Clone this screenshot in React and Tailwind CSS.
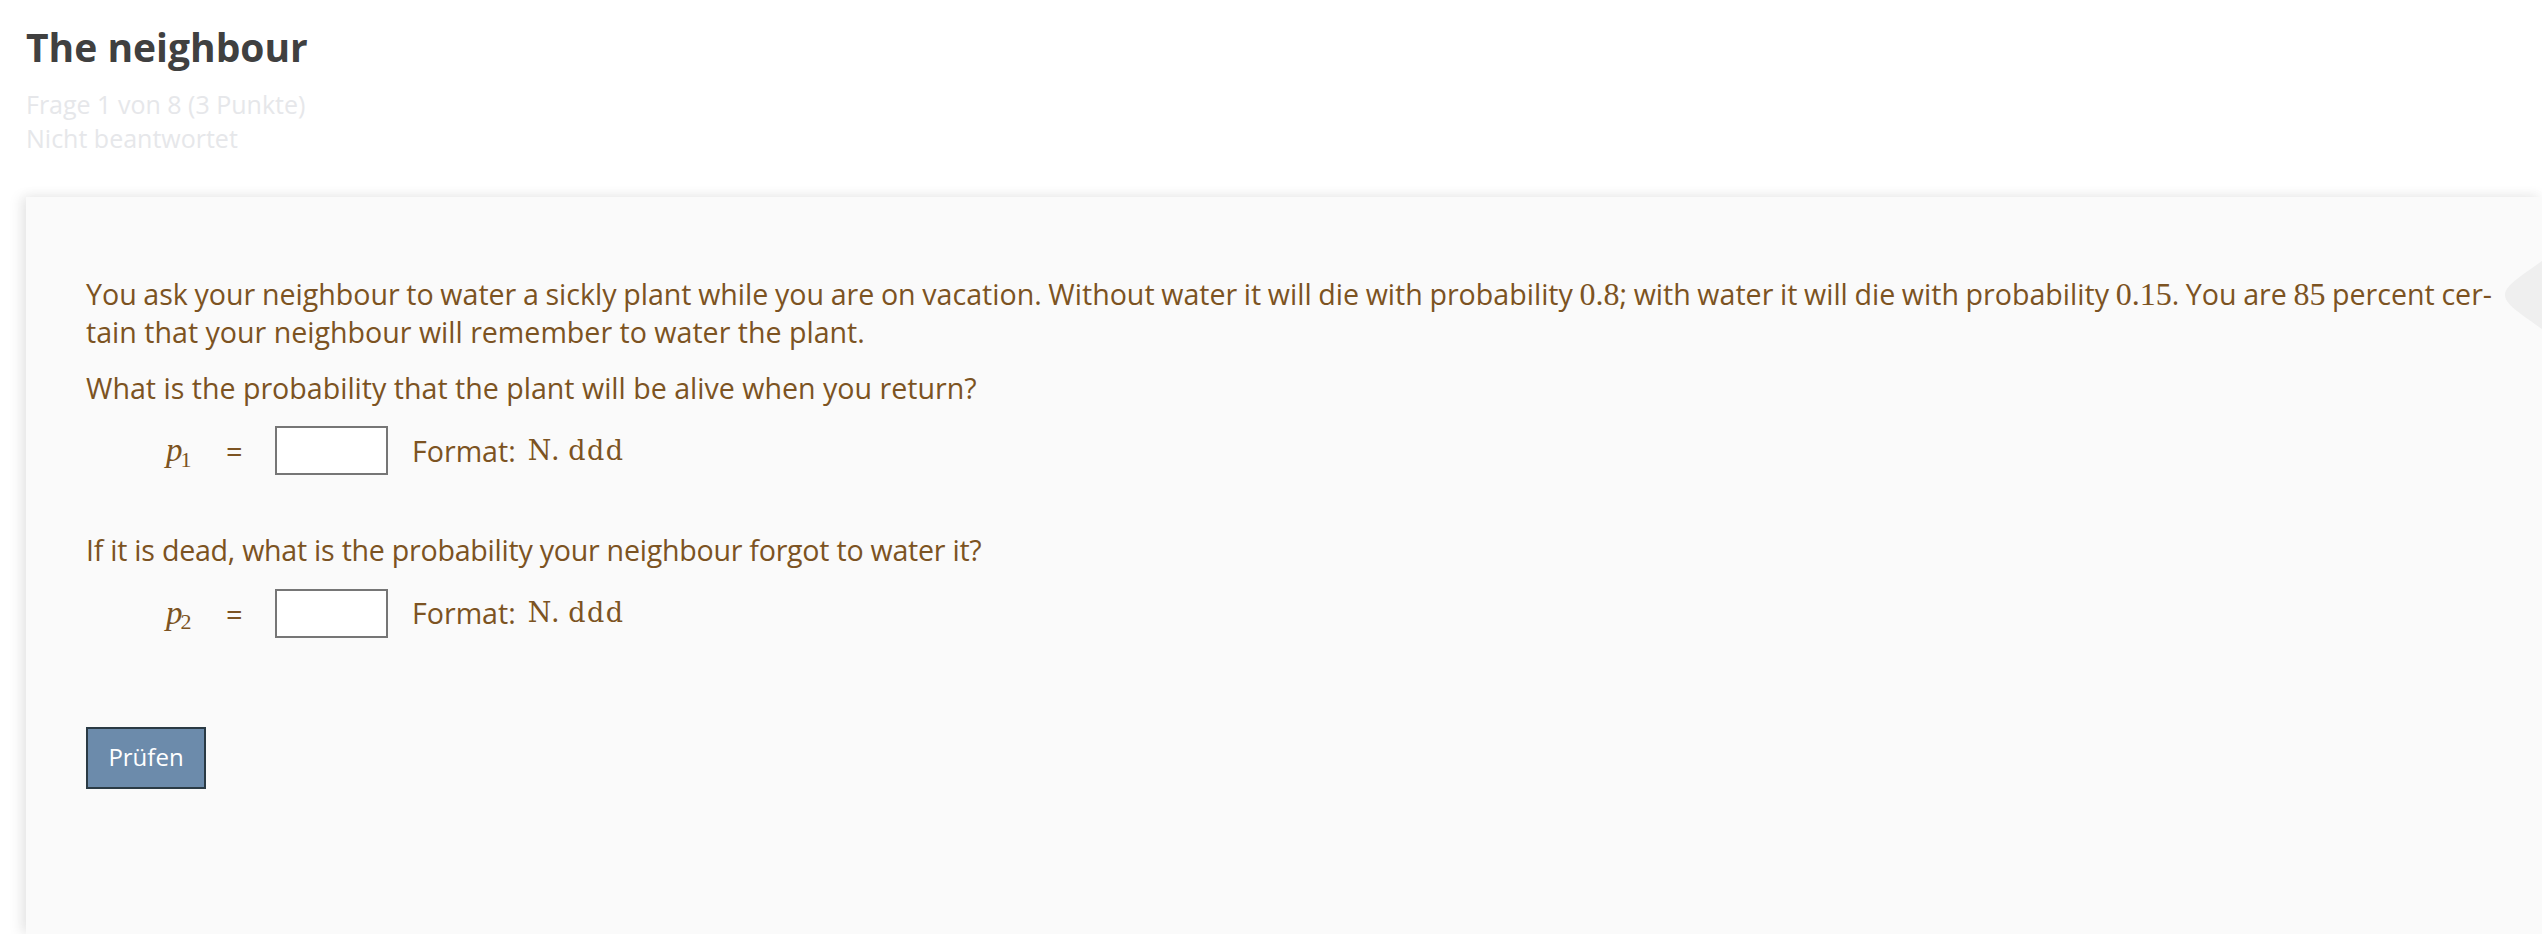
import React from 'react'

const MATH = "font-['Liberation_Serif',serif]"

function Num({ children }) {
  return <span className={`${MATH} text-[32px]`}>{children}</span>
}

function AnswerRow({ sub, className = '' }) {
  return (
    <div className={`flex items-center h-[49px] pl-[80px] ${className}`}>
      <span className={`${MATH} w-[58px] italic text-[33px] leading-none`}>
        p<sub className="not-italic text-[22px] ml-[-2px]">{sub}</sub>
      </span>
      <span className="w-[51px] pl-[2px] text-[29px] leading-none">=</span>
      <input
        type="text"
        className="w-[113px] h-[49px] border-2 border-[#767676] bg-white outline-none"
      />
      <span className="ml-[24px]">Format:</span>
      <span className="ml-[12px] font-['DejaVu_Serif',serif] text-[27px] tracking-[1.5px]">
        N.<span className="ml-[7px]">ddd</span>
      </span>
    </div>
  )
}

export default function App() {
  return (
    <div className="min-h-screen flex flex-col bg-white pl-[26px] font-['Open_Sans',sans-serif]">
      {/* Kopf */}
      <header className="pt-[24px]">
        <h1 className="text-[39px] leading-[46px] font-bold text-[#404040]">The neighbour</h1>
        <div className="mt-[17px] text-[25px] leading-[34px] text-[#e6e7ea]">
          <div>Frage 1 von 8 (3 Punkte)</div>
          <div>Nicht beantwortet</div>
        </div>
      </header>

      {/* Fragepanel */}
      <main className="relative mt-[42px] flex-1 bg-[#fafafa] pl-[60px] pr-[59px] pt-[78px] text-[28.6px] leading-[38.4px] text-[#7c5322] shadow-[0_-3px_12px_rgba(0,0,0,0.04),-6px_0_12px_rgba(0,0,0,0.08)]">
        <p>
          <span className="block whitespace-nowrap text-justify [text-align-last:justify] [word-spacing:-0.8px]">
            You ask your neighbour to water a sickly plant while you are on vacation. Without water it will die with
            probability <Num>0.8</Num>; with water it will die with probability <Num>0.15</Num>. You are{' '}
            <Num>85</Num> percent cer-
          </span>
          <span className="block">tain that your neighbour will remember to water the plant.</span>
        </p>
        <p className="mt-[17px]">What is the probability that the plant will be alive when you return?</p>
        <AnswerRow sub="1" className="mt-[19px]" />

        <p className="mt-[56px] tracking-[-0.25px]">If it is dead, what is the probability your neighbour forgot to water it?</p>
        <AnswerRow sub="2" className="mt-[19px]" />

        <button className="mt-[89px] w-[120px] h-[62px] border-2 border-[#2a3a44] bg-[#6c8bab] text-[24px] text-white">
          Prüfen
        </button>

        {/* Seitenlasche rechts */}
        <svg className="absolute right-0 top-[64px]" width="37" height="68" viewBox="0 0 37 68">
          <path d="M37 0 C 18 14, 0 24, 0 34 C 0 44, 18 54, 37 68 Z" fill="#efefef" />
        </svg>
      </main>
    </div>
  )
}
